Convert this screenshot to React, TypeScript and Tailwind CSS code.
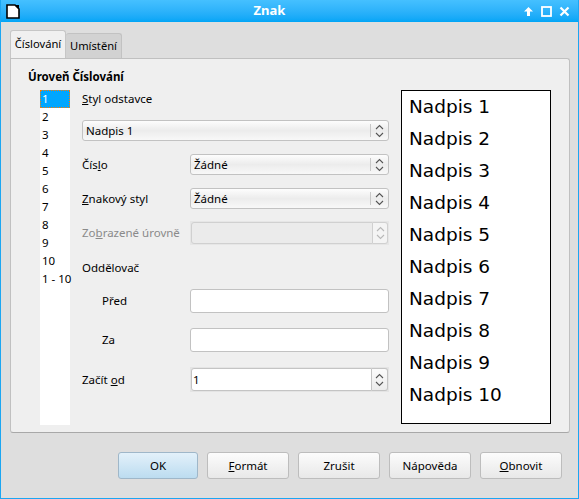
import React from "react"

const UI = { fontFamily: '"Noto Sans", "Open Sans", sans-serif' }

function Chevrons({ disabled = false }: { disabled?: boolean }) {
  const c = disabled ? "#b8b8b8" : "#555"
  return (
    <svg width="9" height="14" viewBox="0 0 9 14">
      <path d="M1 5 L4.5 1.5 L8 5" fill="none" stroke={c} strokeWidth="1.1" />
      <path d="M1 9 L4.5 12.5 L8 9" fill="none" stroke={c} strokeWidth="1.1" />
    </svg>
  )
}

function Combo({ value, h = "h-[21px]" }: { value: string; h?: string }) {
  return (
    <div
      className={`${h} w-full flex items-center rounded-[3px] border border-[#c2c2c2] bg-gradient-to-b from-[#fdfdfd] via-[#ececec] to-[#f8f8f8]`}
    >
      <span className="flex-1 pl-[3px] text-[11.5px] text-black">{value}</span>
      <div className="h-[13px] w-px bg-[#c8c8c8]" />
      <div className="w-[17px] flex justify-center">
        <Chevrons />
      </div>
    </div>
  )
}

function Spin({ value }: { value: string }) {
  return (
    <div className="h-[25px] w-full flex bg-[#e4e4e4] p-px">
      <div className="flex-1 flex items-center rounded-l-[3px] border border-[#c4c4c4] bg-white">
        <span className="pl-[1px] text-[11.5px] text-black">{value}</span>
      </div>
      <div className="w-[16px] flex items-center justify-center rounded-r-[3px] border border-l-0 border-[#c4c4c4] bg-gradient-to-b from-[#fbfbfb] to-[#ececec]">
        <Chevrons />
      </div>
    </div>
  )
}

function Field() {
  return <div className="h-[24px] w-full rounded-[3px] border border-[#c2c2c2] bg-white" />
}

function Button({ children, primary = false }: { children: React.ReactNode; primary?: boolean }) {
  return (
    <div
      className={`h-[27px] flex items-center justify-center rounded-[3px] border text-[11.5px] text-black ${
        primary
          ? "w-[80px] border-[#9fb7c9] bg-gradient-to-b from-[#e3f1fa] to-[#bcdcf0]"
          : "w-[82px] border-[#bdbdbd] bg-gradient-to-b from-[#fcfcfc] to-[#e8e8e8]"
      }`}
    >
      {children}
    </div>
  )
}

export default function App() {
  const levels = ["1", "2", "3", "4", "5", "6", "7", "8", "9", "10", "1 - 10"]
  const preview = Array.from({ length: 10 }, (_, i) => `Nadpis ${i + 1}`)

  return (
    <div
      className="w-[579px] h-[499px] flex flex-col bg-[#dedede] border-x border-b border-[#1ba6f2] overflow-hidden"
      style={UI}
    >
      {/* Title bar */}
      <div className="h-[22px] flex items-center bg-gradient-to-b from-[#45c0ff] to-[#00a5f6] -mx-px">
        <div className="w-[26px] pl-[6px] flex items-center">
          <svg width="14" height="15" viewBox="0 0 14 15">
            <path d="M1 1 H9 L13 5 V14 H1 Z" fill="white" stroke="black" strokeWidth="1.6" />
            <path d="M9 1 L13 1 L13 5 Z" fill="black" />
          </svg>
        </div>
        <div className="flex-1 text-center text-[13px] font-bold text-white pr-[10px]">Znak</div>
        <div className="flex items-center gap-[7px] pr-[9px]">
          <svg width="11" height="11" viewBox="0 0 11 11">
            <path d="M5.5 1 L10 5.5 H7 V10 H4 V5.5 H1 Z" fill="white" />
          </svg>
          <svg width="11" height="11" viewBox="0 0 11 11">
            <rect x="1" y="1" width="9" height="9" fill="none" stroke="white" strokeWidth="1.8" />
          </svg>
          <svg width="11" height="11" viewBox="0 0 11 11">
            <path d="M1.5 1.5 L9.5 9.5 M9.5 1.5 L1.5 9.5" stroke="white" strokeWidth="2.2" />
          </svg>
        </div>
      </div>

      {/* Tabs */}
      <div className="mt-[8px] ml-[9px] h-[28px] flex items-end text-[11.2px] text-black whitespace-nowrap">
        <div className="h-[28px] w-[56px] flex items-center justify-center rounded-t-[3px] border border-b-0 border-[#c6c6c6] bg-[#f0f0f0]">
          Číslování
        </div>
        <div className="h-[25px] w-[56px] flex items-center justify-center rounded-t-[3px] border border-b-0 border-l-0 border-[#c2c2c2] bg-[#d2d2d2]">
          Umístění
        </div>
      </div>

      {/* Panel */}
      <div className="ml-[9px] w-[560px] h-[375px] rounded-b-[3px] rounded-tr-[3px] border border-[#c0c0c0] border-b-[#a8a8a8] bg-[#efefef]">
        <div className="pl-[17px] pt-[9px] h-[31px] text-[11.5px] font-bold text-black">Úroveň Číslování</div>
        <div className="flex">
          {/* Level list */}
          <div className="ml-[29px] w-[30px] h-[335px] bg-white">
            {levels.map((l, i) => (
              <div
                key={l}
                className={`h-[18px] flex items-center pl-[2px] text-[11.5px] whitespace-nowrap ${
                  i === 0
                    ? "bg-[#00a6ff] text-white outline-1 outline-dotted outline-[#ff7a00] -outline-offset-1"
                    : "text-black"
                }`}
              >
                {l}
              </div>
            ))}
          </div>

          {/* Form */}
          <div className="ml-[12px] w-[307px] flex flex-col text-[11.5px] text-black">
            <div className="h-[17px] flex items-center">
              <span>
                <u>S</u>tyl odstavce
              </span>
            </div>
            <div className="mt-[13px]">
              <Combo value="Nadpis 1" />
            </div>
            <div className="mt-[13px] flex items-center">
              <span className="w-[108px]">
                Čís<u>l</u>o
              </span>
              <div className="flex-1">
                <Combo value="Žádné" />
              </div>
            </div>
            <div className="mt-[13px] flex items-center">
              <span className="w-[108px]">
                <u>Z</u>nakový styl
              </span>
              <div className="flex-1">
                <Combo value="Žádné" />
              </div>
            </div>
            <div className="mt-[12px] flex items-center">
              <span className="w-[108px] text-[#8a8a8a]">
                Zo<u>b</u>razené úrovně
              </span>
              <div className="flex-1 h-[24px]">
                <div className="h-[24px] flex bg-[#e6e6e6] p-px">
                  <div className="flex-1 rounded-l-[3px] border border-[#d0d0d0] bg-[#ebebeb]" />
                  <div className="w-[15px] flex items-center justify-center rounded-r-[3px] border border-l-0 border-[#d0d0d0] bg-[#f4f4f4]">
                    <Chevrons disabled />
                  </div>
                </div>
              </div>
            </div>
            <div className="mt-[15px] h-[16px] flex items-center">Oddělovač</div>
            <div className="mt-[13px] flex items-center">
              <span className="w-[108px] pl-[20px]">Před</span>
              <div className="flex-1">
                <Field />
              </div>
            </div>
            <div className="mt-[15px] flex items-center">
              <span className="w-[108px] pl-[20px]">Za</span>
              <div className="flex-1">
                <Field />
              </div>
            </div>
            <div className="mt-[15px] flex items-center">
              <span className="w-[108px]">
                Začít <u>o</u>d
              </span>
              <div className="flex-1">
                <Spin value="1" />
              </div>
            </div>
          </div>

          {/* Preview */}
          <div
            className="ml-[12px] w-[150px] h-[334px] border border-black bg-white pl-[7px]"
            style={{ fontFamily: '"DejaVu Sans", sans-serif' }}
          >
            {preview.map((p) => (
              <div key={p} className="h-[32px] flex items-center text-[18.5px] text-black">
                {p}
              </div>
            ))}
          </div>
        </div>
      </div>

      {/* Buttons */}
      <div className="mt-[19px] ml-[117px] flex gap-[9px]">
        <Button primary>OK</Button>
        <Button>
          <span>
            <u>F</u>ormát
          </span>
        </Button>
        <Button>Zrušit</Button>
        <Button>Nápověda</Button>
        <Button>
          <span>
            <u>O</u>bnovit
          </span>
        </Button>
      </div>
    </div>
  )
}
